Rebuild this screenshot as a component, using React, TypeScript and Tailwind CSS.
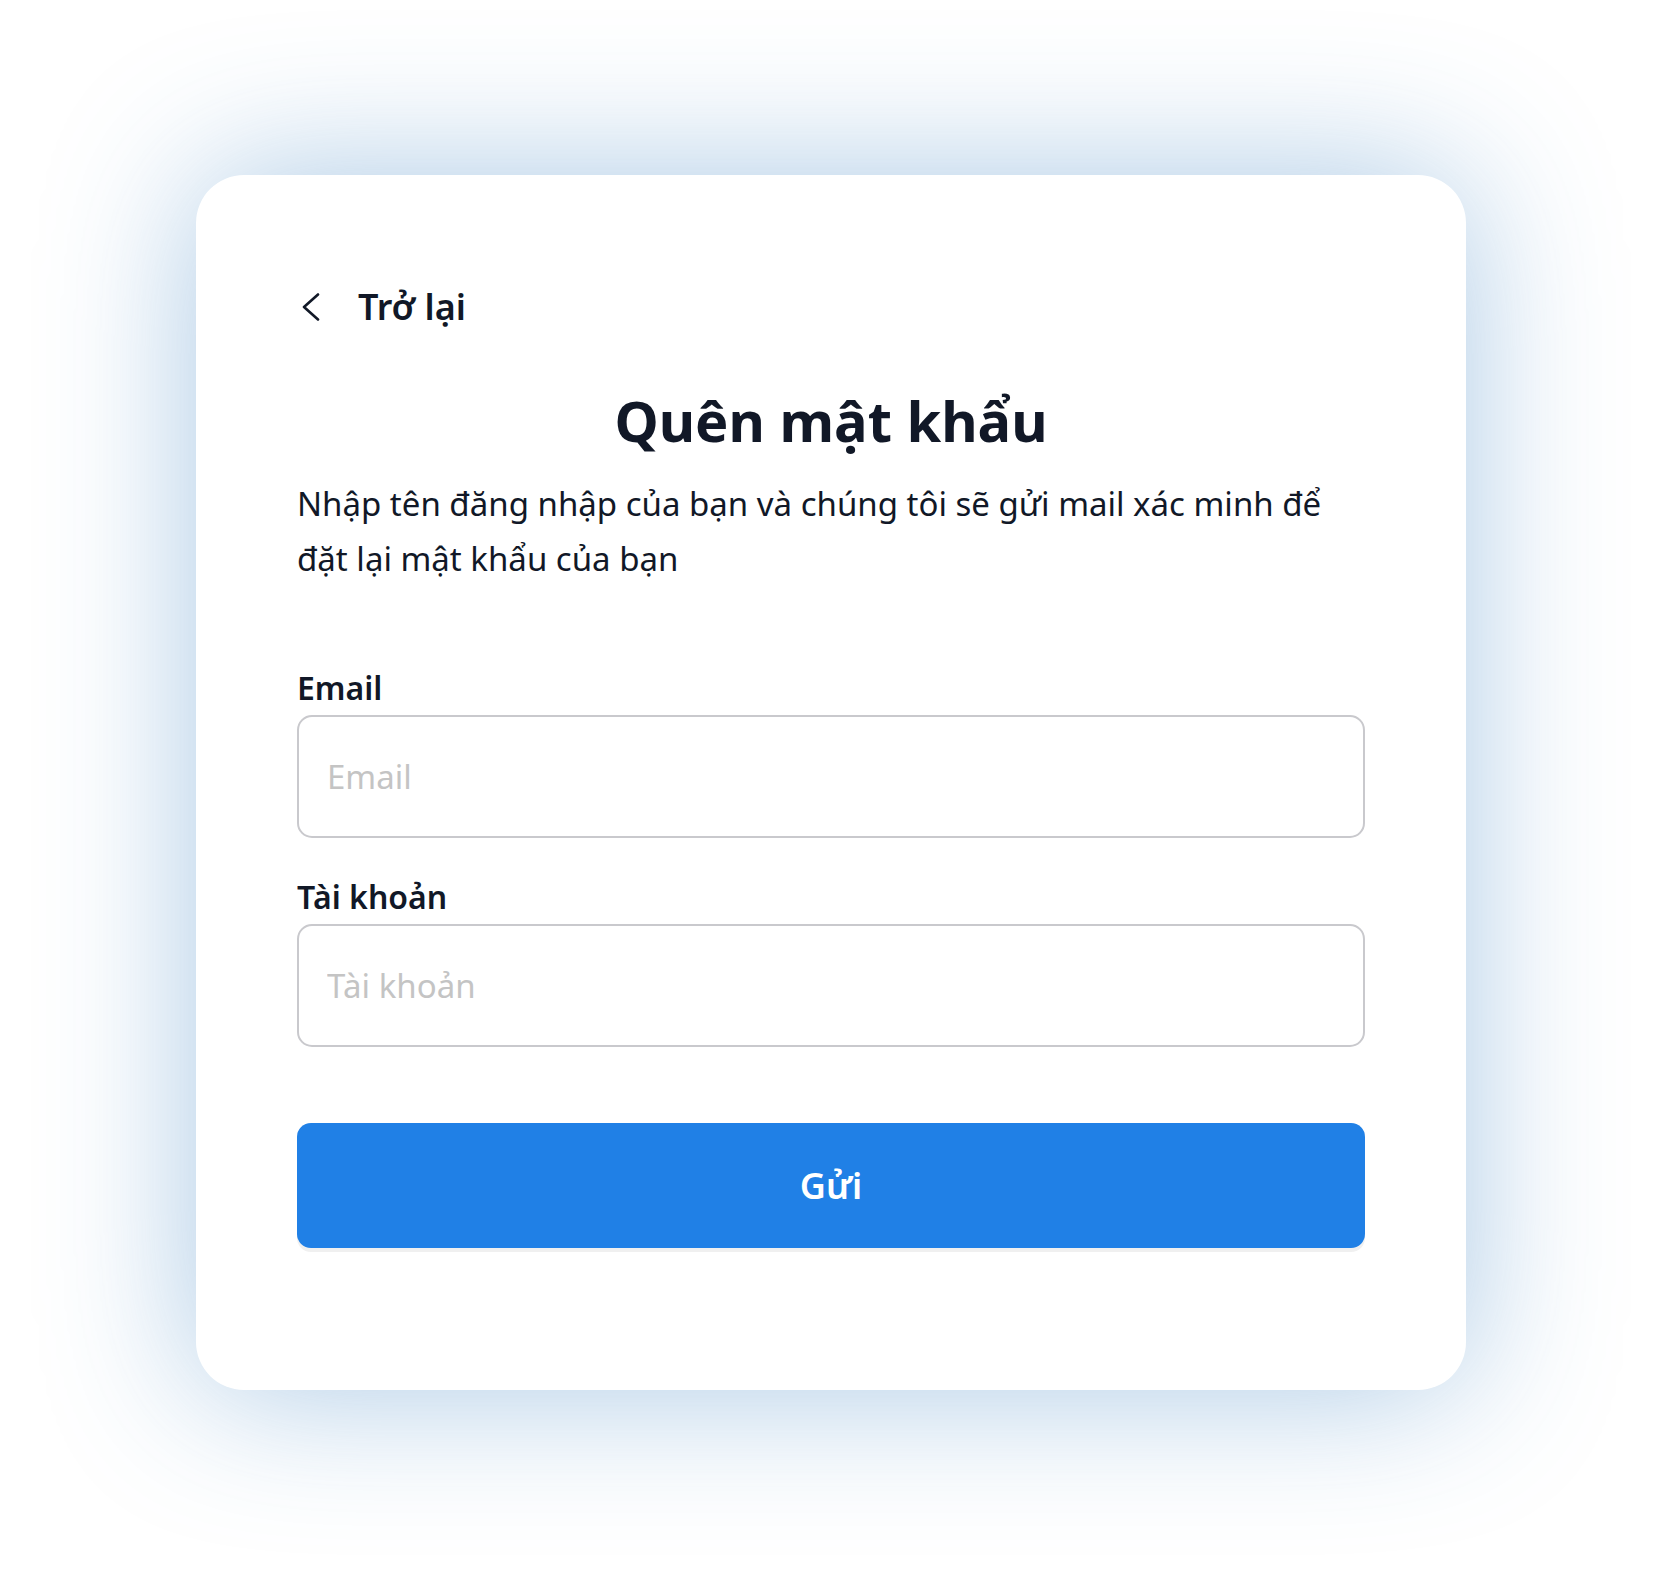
import { useState } from "react";

function BackIcon() {
  return (
    <svg width="18" height="28" viewBox="0 0 18 28" fill="none" className="shrink-0">
      <polyline
        points="16,1.5 2,14 16,26.5"
        stroke="#111827"
        strokeWidth="2.6"
        strokeLinecap="round"
        strokeLinejoin="round"
      />
    </svg>
  );
}

function Field({ label, placeholder, type = "text" }: { label: string; placeholder: string; type?: string }) {
  const [value, setValue] = useState("");
  return (
    <div className="flex flex-col">
      <label className="text-[32px] leading-[40px] font-semibold text-[#111827]">{label}</label>
      <input
        type={type}
        value={value}
        onChange={(e) => setValue(e.target.value)}
        placeholder={placeholder}
        className="mt-[7px] h-[123px] w-full rounded-[15px] border-2 border-[#c9c9cd] bg-white px-[28px] text-[33px] text-[#111827] placeholder:text-[#c4c4c4] outline-none"
      />
    </div>
  );
}

export default function App() {
  return (
    <div className="min-h-screen bg-white pt-[175px] pb-[205px] pl-[196px] pr-[187px] font-['Noto_Sans',sans-serif]">
      <div className="w-[1270px] rounded-[48px] bg-white px-[101px] pt-[105px] pb-[142px] shadow-[0_0_150px_rgba(50,125,190,0.42)]">
        {/* back link */}
        <button className="flex h-[54px] items-center gap-[38px] pl-[5px] text-[36px] leading-[54px] font-semibold text-[#111827]">
          <BackIcon />
          <span>Trở lại</span>
        </button>

        <h1 className="mt-[54px] text-center text-[56px] leading-[65px] font-bold text-[#111827]">
          Quên mật khẩu
        </h1>

        <p className="mt-[23px] text-[33px] leading-[55px] text-[#111827]">
          Nhập tên đăng nhập của bạn và chúng tôi sẽ gửi mail xác minh để
          <br />
          đặt lại mật khẩu của bạn
        </p>

        <div className="mt-[82px]">
          <Field label="Email" placeholder="Email" type="email" />
        </div>
        <div className="mt-[39px]">
          <Field label="Tài khoản" placeholder="Tài khoản" />
        </div>

        <button className="mt-[76px] flex h-[125px] w-full items-center justify-center rounded-[14px] bg-[#2080e6] text-[36px] font-semibold text-white shadow-[0_4px_0_#f0f0f0]">
          Gửi
        </button>
      </div>
    </div>
  );
}
